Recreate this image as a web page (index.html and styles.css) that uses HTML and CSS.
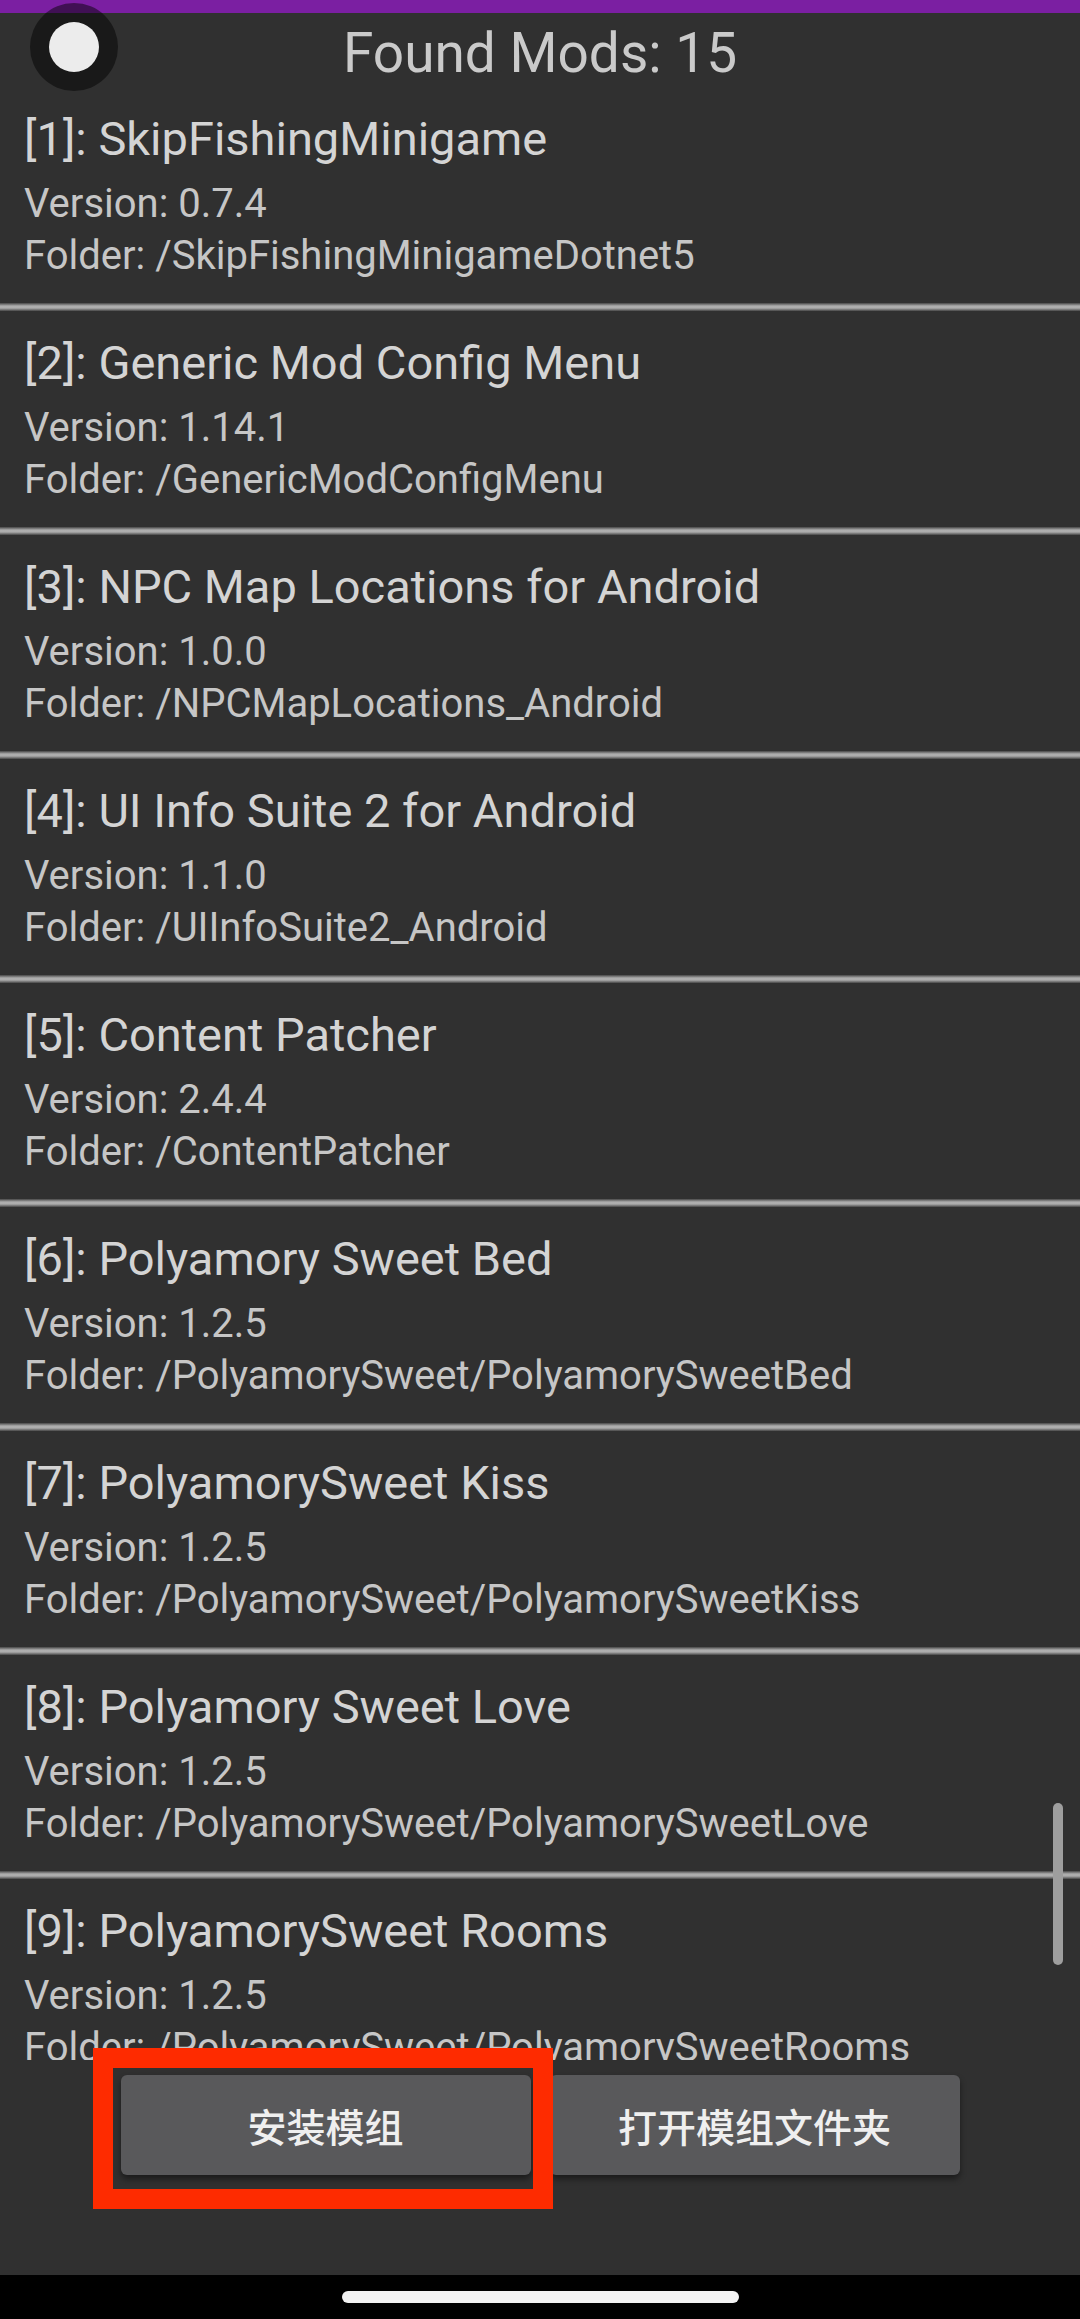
FILE: index.html
```html
<!DOCTYPE html>
<html lang="zh-CN">
<head>
    <meta charset="UTF-8">
    <meta name="viewport" content="width=device-width, initial-scale=1.0">
    <title>Found Mods</title>
    <link rel="stylesheet" href="styles.css">
</head>
<body>
    <div class="screen">
        <div class="status-strip"></div>
        <div class="header">
            <div class="toggle"><span class="toggle-thumb"></span></div>
            <h1 class="header-title">Found Mods: 15</h1>
        </div>

        <div class="mod-list">
            <div class="mod">
                <div class="mod-name">[1]: SkipFishingMinigame</div>
                <div class="mod-info">Version: 0.7.4</div>
                <div class="mod-info">Folder: /SkipFishingMinigameDotnet5</div>
            </div>
            <div class="divider"></div>
            <div class="mod">
                <div class="mod-name">[2]: Generic Mod Config Menu</div>
                <div class="mod-info">Version: 1.14.1</div>
                <div class="mod-info">Folder: /GenericModConfigMenu</div>
            </div>
            <div class="divider"></div>
            <div class="mod">
                <div class="mod-name">[3]: NPC Map Locations for Android</div>
                <div class="mod-info">Version: 1.0.0</div>
                <div class="mod-info">Folder: /NPCMapLocations_Android</div>
            </div>
            <div class="divider"></div>
            <div class="mod">
                <div class="mod-name">[4]: UI Info Suite 2 for Android</div>
                <div class="mod-info">Version: 1.1.0</div>
                <div class="mod-info">Folder: /UIInfoSuite2_Android</div>
            </div>
            <div class="divider"></div>
            <div class="mod">
                <div class="mod-name">[5]: Content Patcher</div>
                <div class="mod-info">Version: 2.4.4</div>
                <div class="mod-info">Folder: /ContentPatcher</div>
            </div>
            <div class="divider"></div>
            <div class="mod">
                <div class="mod-name">[6]: Polyamory Sweet Bed</div>
                <div class="mod-info">Version: 1.2.5</div>
                <div class="mod-info">Folder: /PolyamorySweet/PolyamorySweetBed</div>
            </div>
            <div class="divider"></div>
            <div class="mod">
                <div class="mod-name">[7]: PolyamorySweet Kiss</div>
                <div class="mod-info">Version: 1.2.5</div>
                <div class="mod-info">Folder: /PolyamorySweet/PolyamorySweetKiss</div>
            </div>
            <div class="divider"></div>
            <div class="mod">
                <div class="mod-name">[8]: Polyamory Sweet Love</div>
                <div class="mod-info">Version: 1.2.5</div>
                <div class="mod-info">Folder: /PolyamorySweet/PolyamorySweetLove</div>
            </div>
            <div class="divider"></div>
            <div class="mod">
                <div class="mod-name">[9]: PolyamorySweet Rooms</div>
                <div class="mod-info">Version: 1.2.5</div>
                <div class="mod-info">Folder: /PolyamorySweet/PolyamorySweetRooms</div>
            </div>
            <div class="divider"></div>

            <div class="scrollbar"></div>
        </div>

        <div class="actions">
            <button class="action-btn">安装模组</button>
            <button class="action-btn">打开模组文件夹</button>
            <div class="highlight"></div>
        </div>

        <div class="nav-bar">
            <span class="home-pill"></span>
        </div>
    </div>
</body>
</html>
```

FILE: styles.css
```css
html, body {
    margin: 0;
    padding: 0;
}

body {
    background-color: #303030;
    font-family: 'Roboto', 'Noto Sans CJK SC', sans-serif;
    color: #d2d2d2;
}

.screen {
    display: flex;
    flex-direction: column;
    width: 1080px;
    height: 2319px;
    position: relative;
    overflow: hidden;
}

.status-strip {
    height: 13px;
    background-color: #7b1fa2;
    flex-shrink: 0;
}

.header {
    height: 74px;
    flex-shrink: 0;
    box-sizing: border-box;
    padding-top: 6px;
}

.header-title {
    margin: 0;
    font-size: 55px;
    font-weight: normal;
    line-height: 68px;
    text-align: center;
    color: #cacaca;
}

/* switch thumb floating over the header */
.toggle {
    position: absolute;
    left: 30px;
    top: 3px;
    width: 88px;
    height: 88px;
    border-radius: 50%;
    background-color: rgba(0, 0, 0, 0.48);
    display: flex;
    justify-content: center;
    align-items: center;
}

.toggle-thumb {
    width: 50px;
    height: 50px;
    border-radius: 50%;
    background-color: #ececec;
}

.mod-list {
    flex: 1;
    overflow: hidden;
    position: relative;
}

.mod {
    padding: 24px 0 21px 24px;
    white-space: nowrap;
}

.mod-name {
    font-size: 47px;
    line-height: 56px;
    color: #d4d4d4;
    margin-bottom: 11px;
}

.mod-info {
    font-size: 40px;
    line-height: 52px;
    color: #c6c6c6;
}

.divider {
    height: 8px;
    background: linear-gradient(to bottom, #464646 0, #9a9a9a 30%, #b6b6b6 50%, #9a9a9a 70%, #464646 100%);
}

.scrollbar {
    position: absolute;
    right: 17px;
    top: 1716px;
    width: 10px;
    height: 162px;
    border-radius: 5px;
    background-color: #9e9e9e;
}

.actions {
    height: 215px;
    flex-shrink: 0;
    box-sizing: border-box;
    padding-top: 15px;
    display: flex;
    justify-content: center;
    align-items: flex-start;
    gap: 19px;
    position: relative;
}

.action-btn {
    width: 410px;
    height: 100px;
    border: none;
    border-radius: 6px;
    background-color: #59595b;
    color: #efefef;
    font-family: 'Noto Sans CJK SC', sans-serif;
    font-size: 39px;
    font-weight: 500;
    box-shadow: 0 4px 6px rgba(0, 0, 0, 0.45);
    cursor: pointer;
}

/* red annotation frame drawn over the first button */
.highlight {
    position: absolute;
    left: 93px;
    top: -12px;
    width: 460px;
    height: 161px;
    box-sizing: border-box;
    border: 20px solid #fe2b00;
}

.nav-bar {
    height: 44px;
    flex-shrink: 0;
    background-color: #000;
    display: flex;
    justify-content: center;
    padding-top: 16px;
    box-sizing: border-box;
}

.home-pill {
    width: 397px;
    height: 12px;
    border-radius: 6px;
    background-color: #f3f3f3;
}
```
